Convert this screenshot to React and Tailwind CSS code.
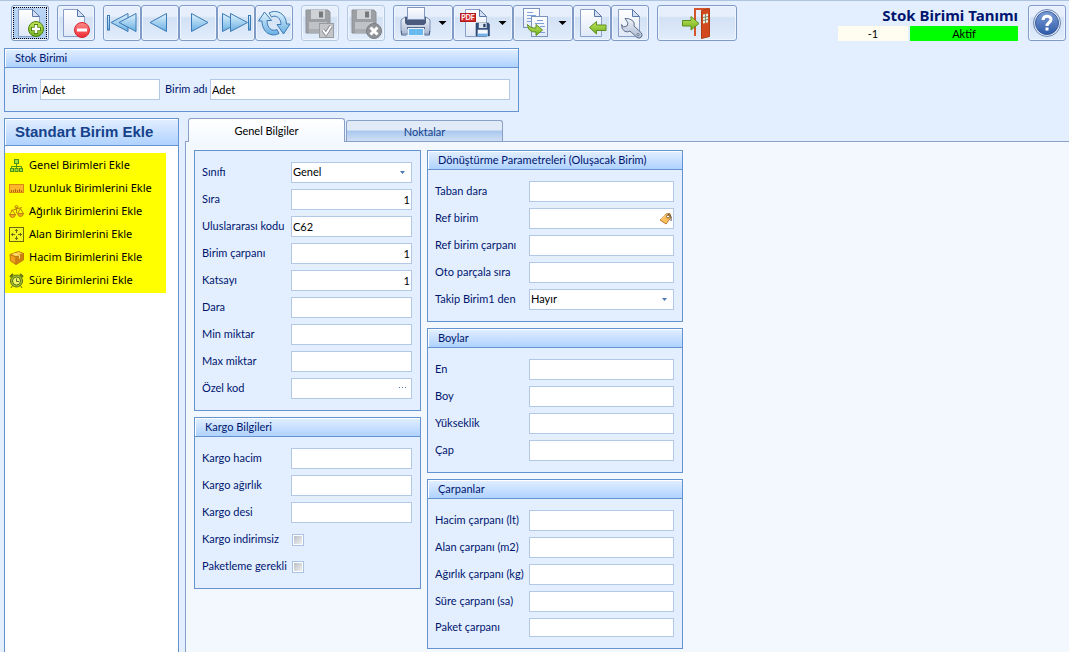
import { useState } from 'react'
import { clsx } from 'clsx'

const Page = ({ x = 7, y = 4, w = 21, h = 27 }) => (
  <g>
    <path
      d={`M${x + 0.5} ${y + 0.5}h${w - 7}l7 7v${h - 7}h${-w}z`}
      fill="url(#paper)"
      stroke="#8a9fc8"
    />
    <path d={`M${x + w - 6.5} ${y + 0.5}v7h7z`} fill="#d5e0f2" stroke="#5b78ab" />
  </g>
)

const Floppy = ({ x, y, s, gray }) => (
  <g transform={`translate(${x} ${y}) scale(${s})`}>
    <path d="M0 0H22L24 2V23H0Z" fill={gray ? '#9c9fa4' : '#33507c'} stroke={gray ? '#8e9196' : '#23395e'} />
    <rect x="5" y="0" width="14" height="9" fill={gray ? '#d0d3d6' : '#dbe6f5'} />
    <rect x="13" y="1.5" width="4" height="6" fill={gray ? '#75797e' : '#23395e'} />
    <rect x="3" y="12" width="18" height="11" fill={gray ? '#c0c2c6' : '#f4f8fd'} />
    <rect x="3" y="19" width="18" height="4" fill={gray ? '#aaadb1' : '#6bb0ea'} />
  </g>
)

const Caret = () => <path d="M45.500 16h8l-4 4z" fill="#000" />

const icons = {
  add: (
    <>
      <Page />
      <circle cx="25" cy="24" r="7.500" fill="url(#green)" stroke="#4f8212" />
      <path d="M25 19v10M20 24h10" stroke="#4f8212" strokeWidth="4" />
      <path d="M25 20v8M21 24h8" stroke="#fff" strokeWidth="2.500" />
    </>
  ),
  remove: (
    <>
      <Page x={6} />
      <circle cx="25" cy="25" r="7.500" fill="url(#red)" stroke="#d5222c" />
      <rect x="20" y="23.500" width="10" height="3" fill="#fff" />
    </>
  ),
  first: (
    <g fill="url(#sky)" stroke="#3b7ab5">
      <rect x="4.500" y="10.500" width="2" height="14.500" />
      <path d="M8 17.500 25 8.500v18z" />
      <path d="M16 17.500 33 8.500v18z" />
    </g>
  ),
  prev: <path d="M9 17.500 25.500 8.500v18z" fill="url(#sky)" stroke="#3b7ab5" />,
  next: <path d="M29 17.500 12.500 8.500v18z" fill="url(#sky)" stroke="#3b7ab5" />,
  last: (
    <g fill="url(#sky)" stroke="#3b7ab5">
      <path d="M22.500 17.500 5.500 8.500v18z" />
      <path d="M30.500 17.500 13.500 8.500v18z" />
      <rect x="31.500" y="10.500" width="2" height="14.500" />
    </g>
  ),
  refresh: (
    <g fill="url(#sky)" stroke="#3b7ab5" strokeLinejoin="round">
      <path d="M14 8C21 4 31 8 31.500 19H35L28.500 29 22 19.500h4C26 13 21 9.500 16.500 12z" />
      <path d="M24 28.500C17 32.500 7 28 7 16H3.500L9.500 7 16.500 15.500H12C12 23 17 27 22 24.500z" />
    </g>
  ),
  save: (
    <>
      <Floppy x={5} y={5} s={1} gray />
      <rect x="18.500" y="18.500" width="14" height="14" fill="#c3c5c8" stroke="#999ca1" />
      <path d="M22 25l3 4 5-8" fill="none" stroke="#7b7f85" strokeWidth="3.500" />
      <path d="M22 25l3 4 5-8" fill="none" stroke="#fff" strokeWidth="2" />
    </>
  ),
  cancel: (
    <>
      <Floppy x={5} y={5} s={1} gray />
      <circle cx="27" cy="26" r="7.500" fill="#909397" stroke="#7b7e83" />
      <path d="M23.500 22.500l7 7M30.500 22.500l-7 7" stroke="#fff" strokeWidth="3" />
    </>
  ),
  print: (
    <>
      <path d="M12 12h21l4 3v12q0 2-2 2H10q-2 0-2-2V15z" fill="url(#steel)" stroke="#7d90b6" />
      <path d="M12 12h21v6l-2 2H14l-2-2z" fill="#4a5a7c" />
      <rect x="14.500" y="2.500" width="17" height="12" fill="url(#paper)" stroke="#8296bd" />
      <rect x="14" y="22" width="18" height="2" fill="#5a6a8c" />
      <rect x="15.500" y="23.500" width="15" height="7" fill="#69b8ee" stroke="#e6f1fb" />
      <path d="M8.500 26v4h5M36.500 26v4h-5" fill="none" stroke="#51648d" />
      <Caret />
    </>
  ),
  pdf: (
    <>
      <Page x={12} />
      <rect x="7.500" y="8.500" width="15" height="8" fill="#d22f2f" stroke="#b01c1c" />
      <text x="15" y="15" fontSize="7" fontWeight="700" textAnchor="middle" fill="#fff">PDF</text>
      <Floppy x={23} y={18} s={0.56} />
      <Caret />
    </>
  ),
  copy: (
    <>
      <rect x="10.500" y="3.500" width="16" height="19" fill="url(#paper)" stroke="#7c93bd" />
      <path d="M14 7.500h6M14 10.500h9M14 13.500h9M14 16.500h9" stroke="#7fa0d8" />
      <rect x="18.500" y="11.500" width="16" height="20" fill="url(#paper)" stroke="#7c93bd" />
      <path d="M24 15.500h6M22 18.500h9M27 21.500h5M27 27.500h5" stroke="#7fa0d8" />
      <path d="M14.500 19.500q3 4 8.500 3.500v-3.500l6.500 5.500-6.500 5.500V27q-8 .5-8.500-7.500z" fill="url(#green)" stroke="#5b8f1f" />
      <Caret />
    </>
  ),
  import: (
    <>
      <Page />
      <path d="M16.500 22.500l7-6v3.500h9.500v5.500h-9.500V29z" fill="url(#green)" stroke="#5b8f1f" />
    </>
  ),
  tools: (
    <>
      <Page />
      <path
        d="M14 13.500l3 4.500-1 3-3.500 1-2-2.500q0 5.500 3.500 7 3 1 5-.5l7 6.500q2.500 1.500 4.500-.5 1.500-2.500-.5-4.500l-7-6.500q1-3.500-1.500-5.500-3.500-2.500-7.500-2z"
        fill="url(#steel)"
        stroke="#5f6f8c"
      />
      <circle cx="27" cy="29.500" r="1" fill="#fff" stroke="#5f6f8c" />
    </>
  ),
  exit: (
    <>
      <path d="M38 31V4h14" fill="none" stroke="#d4552a" strokeWidth="2" />
      <path d="M44.500 5.500 52.500 3.500v28l-8 2z" fill="#d2491d" stroke="#b23c14" />
      <path d="M46 9.500l5-1v9l-5 1z" fill="#e9efe0" />
      <path d="M48.500 9v9M46 12.500l5-1M46 15.500l5-1" stroke="#7e8a6a" />
      <path d="M25.500 15.500H34v-4l8 7-8 6.500V21h-8.500z" fill="url(#green)" stroke="#5b8f1f" />
    </>
  ),
  help: (
    <>
      <circle cx="19" cy="18" r="13.500" fill="#dfe8f6" stroke="#6c86b5" />
      <circle cx="19" cy="18" r="11.500" fill="url(#blue)" stroke="#3c5c9c" />
      <path d="M15 15c0-5 8-5 8-.5 0 3-4 3-4 6.500" fill="none" stroke="#fff" strokeWidth="3" />
      <rect x="17.500" y="22.500" width="3" height="3" fill="#fff" />
    </>
  ),
}

const toolbar = [
  [{ icon: 'add', label: 'Yeni', active: true }],
  [{ icon: 'remove', label: 'Sil' }],
  [
    { icon: 'first', label: 'İlk' },
    { icon: 'prev', label: 'Önceki' },
    { icon: 'next', label: 'Sonraki' },
    { icon: 'last', label: 'Son' },
    { icon: 'refresh', label: 'Yenile' },
  ],
  [{ icon: 'save', label: 'Kaydet', disabled: true }],
  [{ icon: 'cancel', label: 'İptal', disabled: true }],
  [
    { icon: 'print', label: 'Yazdır', width: 60 },
    { icon: 'pdf', label: 'PDF', width: 60 },
    { icon: 'copy', label: 'Kopyala', width: 60 },
    { icon: 'import', label: 'Aktar' },
    { icon: 'tools', label: 'Ayarlar' },
  ],
  [{ icon: 'exit', label: 'Çıkış', width: 80 }],
]

const unitLinks = [
  {
    label: 'Genel Birimleri Ekle',
    icon: (
      <g fill="#9be23c" stroke="#4f8f1c">
        <path d="M7.500 6v5M2.500 11V8.500h10V11" fill="none" />
        <rect x="5.500" y="1.500" width="4" height="4" />
        <rect x="1.500" y="10.500" width="3" height="3" />
        <rect x="6" y="10.500" width="3" height="3" />
        <rect x="10.500" y="10.500" width="3" height="3" />
      </g>
    ),
  },
  {
    label: 'Uzunluk Birimlerini Ekle',
    icon: (
      <>
        <rect x=".5" y="3.500" width="14" height="8" fill="#fdb52c" stroke="#d98a14" />
        <path d="M2.500 11V9M4.500 11v-2M6.500 11V8M8.500 11v-2M10.500 11V8M12.500 11v-2" stroke="#b06a10" />
      </>
    ),
  },
  {
    label: 'Ağırlık Birimlerini Ekle',
    icon: (
      <g fill="none" stroke="#bd8210">
        <path d="M2 6.500l11-3M7.500 3v6" />
        <circle cx="7.500" cy="3" r="1.500" />
        <path d="M3.500 6.500.5 10.500h6zM11.500 4.500l-3 5h6z" />
        <path d="M.5 10.500h6q-.5 3-3 3t-3-3zM8.500 9.500h6q-.5 3-3 3t-3-3z" fill="#f3a81c" />
      </g>
    ),
  },
  {
    label: 'Alan Birimlerini Ekle',
    icon: (
      <g stroke="#6a6a10">
        <rect x=".5" y=".5" width="14" height="14" fill="#f4f420" />
        <path d="M7.500 2v4M7.500 9v4M2 7.500h4M9 7.500h4" />
        <path d="M6 3.500h3M6 11.500h3M3.500 6v3M11.500 6v3" />
      </g>
    ),
  },
  {
    label: 'Hacim Birimlerini Ekle',
    icon: (
      <g stroke="#c07a10" strokeLinejoin="round">
        <path d="M1 4.500l8.500-3 5 2L7 7z" fill="#ffd04a" />
        <path d="M1 4.500L7 7v7.500L1.500 11z" fill="#f0a01c" />
        <path d="M7 7l7.500-3.500V10L7 14.500z" fill="#d0800c" />
        <path d="M4.500 3.500l6 2v3" fill="none" stroke="#ffe98a" />
      </g>
    ),
  },
  {
    label: 'Süre Birimlerini Ekle',
    icon: (
      <g stroke="#5d7213">
        <path d="M3.500 12.500 2 15M11.500 12.500l1.500 2.500" />
        <path d="M1 4 4 1M14 4l-3-3" strokeWidth="2" />
        <circle cx="7.500" cy="8" r="6" fill="#a4bf2c" />
        <circle cx="7.500" cy="8" r="4" fill="#eef56a" />
        <path d="M7.500 5.500v3H10" fill="none" />
      </g>
    ),
  },
]

function GradientDefs() {
  const stops = {
    paper: ['#ffffff', '#dfe8f7'],
    sky: ['#e0f2fd', '#69afe2'],
    green: ['#c4e65a', '#6fae20'],
    red: ['#ff8a8a', '#ee2c34'],
    steel: ['#f0f4fa', '#a9b7cf'],
    blue: ['#7d9fd8', '#2f5aa8'],
  }
  return (
    <svg className="absolute size-0" aria-hidden="true">
      <defs>
        {Object.entries(stops).map(([id, [from, to]]) => (
          <linearGradient key={id} id={id} x1="0" y1="0" x2="0" y2="1">
            <stop offset="0" stopColor={from} />
            <stop offset="1" stopColor={to} />
          </linearGradient>
        ))}
      </defs>
    </svg>
  )
}

function ToolButton({ icon, label, width = 38, active, disabled }) {
  return (
    <button
      type="button"
      aria-label={label}
      disabled={disabled}
      className={clsx(
        'h-9 rounded-[3px] border shadow-[inset_0_0_0_1px_#eef5ff]',
        disabled ? 'border-[#b4c8e2]' : 'border-[#7f9bc6]',
        active
          ? 'bg-linear-to-b from-[#bdd5f3] to-[#a9cbf2]'
          : 'bg-linear-to-b from-[#e6effb] from-30% via-[#d2e1f4] via-35% to-[#e1edfc]',
      )}
    >
      <span className={clsx('block', active && 'm-0.5 outline-1 outline-dotted outline-black')}>
        <svg
          width={active ? width - 6 : width - 2}
          height={active ? 30 : 34}
          viewBox={active ? `3 3 ${width - 6} 30` : `1 1 ${width - 2} 34`}
          className="block"
          aria-hidden="true"
        >
          {icons[icon]}
        </svg>
      </span>
    </button>
  )
}

function Group({ title, children, className }) {
  return (
    <section className={clsx('border border-[#6593cf] bg-[#e3efff]', className)}>
      {title && (
        <h2 className="h-[19px] border-b border-[#6593cf] bg-linear-to-b from-[#e3efff] to-[#afd2ff] pl-2.5 leading-[18px] shadow-[inset_1px_1px_0_#fff]">
          {title}
        </h2>
      )}
      {children}
    </section>
  )
}

const inputStyle = 'w-full border border-[#b3c8e6] bg-white px-px text-black outline-none'

function Field({ id, label, value = '', kind, short, wide }) {
  return (
    <div className={clsx('flex items-center', short ? 'h-[19px]' : 'h-[21px]')}>
      <label htmlFor={id} className={clsx('shrink-0 whitespace-nowrap', wide ? 'w-[94px]' : 'w-[89px]')}>
        {label}
      </label>
      {kind === 'check' ? (
        <input
          id={id}
          type="checkbox"
          className="ml-px size-3 appearance-none border border-[#a9c1e2] bg-linear-to-br from-[#b4b9c2] to-[#f6f6f6] shadow-[inset_0_0_0_1px_#fff] checked:from-[#3b619c]"
        />
      ) : (
        <div className="relative h-full flex-1">
          {kind === 'select' ? (
            <select id={id} defaultValue={value} className={clsx(inputStyle, 'h-full appearance-none')}>
              <option>{value}</option>
            </select>
          ) : (
            <input
              id={id}
              type="text"
              defaultValue={value}
              className={clsx(inputStyle, 'h-full', kind === 'number' && 'text-right')}
            />
          )}
          {kind === 'select' && (
            <svg width="5" height="3" className="pointer-events-none absolute top-[9px] right-[7px]" aria-hidden="true">
              <path d="M0 0h5L2.500 3z" fill="#4a76b5" />
            </svg>
          )}
          {kind === 'lookup' && (
            <button type="button" aria-label={`${label} seç`} className="absolute top-1 right-px flex h-3 w-4 items-center justify-center">
              <svg width="8" height="2" aria-hidden="true">
                <path d="M0 .5h1M3 .5h1M6 .5h1" stroke="#4a76b5" />
              </svg>
            </button>
          )}
          {kind === 'tag' && (
            <button type="button" aria-label={`${label} seç`} className="absolute top-1 right-0.5">
              <svg width="13" height="13" aria-hidden="true">
                <path d="M1 8l6-6 4-.5 1 4-5 6.500z" fill="#fbc05c" stroke="#b97b38" />
                <path d="M2 7.500l5-5" stroke="#ffe3a8" />
                <circle cx="9" cy="4.500" r="1.500" fill="#fff" stroke="#8a5a24" />
                <path d="M9 2q4 1 3 7" fill="none" stroke="#555" />
              </svg>
            </button>
          )}
        </div>
      )}
    </div>
  )
}

function FieldGroup({ title, fields, wide }) {
  return (
    <Group title={title}>
      <div className="flex flex-col gap-1.5 py-[11px] pr-2 pl-[7px]">
        {fields.map(field => (
          <Field key={field.id} wide={wide} {...field} />
        ))}
      </div>
    </Group>
  )
}

const generalFields = [
  { id: 'sinifi', label: 'Sınıfı', value: 'Genel', kind: 'select' },
  { id: 'sira', label: 'Sıra', value: '1', kind: 'number' },
  { id: 'kod', label: 'Uluslararası kodu', value: 'C62' },
  { id: 'carpan', label: 'Birim çarpanı', value: '1', kind: 'number' },
  { id: 'katsayi', label: 'Katsayı', value: '1', kind: 'number' },
  { id: 'dara', label: 'Dara' },
  { id: 'min', label: 'Min miktar' },
  { id: 'max', label: 'Max miktar' },
  { id: 'ozel', label: 'Özel kod', kind: 'lookup' },
]

const cargoFields = [
  { id: 'kargo-hacim', label: 'Kargo hacim' },
  { id: 'kargo-agirlik', label: 'Kargo ağırlık' },
  { id: 'kargo-desi', label: 'Kargo desi' },
  { id: 'kargo-indirimsiz', label: 'Kargo indirimsiz', kind: 'check' },
  { id: 'paketleme', label: 'Paketleme gerekli', kind: 'check' },
]

const conversionFields = [
  { id: 'taban-dara', label: 'Taban dara' },
  { id: 'ref-birim', label: 'Ref birim', kind: 'tag' },
  { id: 'ref-carpan', label: 'Ref birim çarpanı' },
  { id: 'oto-parcala', label: 'Oto parçala sıra' },
  { id: 'takip', label: 'Takip Birim1 den', value: 'Hayır', kind: 'select' },
]

const sizeFields = [
  { id: 'en', label: 'En' },
  { id: 'boy', label: 'Boy' },
  { id: 'yukseklik', label: 'Yükseklik' },
  { id: 'cap', label: 'Çap' },
]

const factorFields = [
  { id: 'hacim-carpan', label: 'Hacim çarpanı (lt)' },
  { id: 'alan-carpan', label: 'Alan çarpanı (m2)' },
  { id: 'agirlik-carpan', label: 'Ağırlık çarpanı (kg)' },
  { id: 'sure-carpan', label: 'Süre çarpanı (sa)' },
  { id: 'paket-carpan', label: 'Paket çarpanı', short: true },
]

function Header() {
  return (
    <header className="flex h-[48px] items-start border-t border-[#b0c4de] pt-1 pr-[3px] pl-[11px]">
      <div className="flex gap-2">
        {toolbar.map((group, i) => (
          <div key={i} className="flex">
            {group.map(item => (
              <ToolButton key={item.icon} {...item} />
            ))}
          </div>
        ))}
      </div>
      <div className="mr-2.5 ml-auto w-[180px]">
        <h1 className="h-[21px] text-right font-['Noto_Sans',sans-serif] text-[15px] leading-[21px] font-bold text-[#00156e]">
          Stok Birimi Tanımı
        </h1>
        <div className="flex gap-0.5 text-center leading-[15px] text-black">
          <span className="w-[70px] bg-[#fffcf0]">-1</span>
          <span className="flex-1 bg-[#00ff00]">Aktif</span>
        </div>
      </div>
      <ToolButton icon="help" label="Yardım" />
    </header>
  )
}

function Sidebar() {
  return (
    <aside className="w-[175px] shrink-0 border border-b-0 border-[#6593cf] bg-white">
      <h2 className="h-[27px] border-b border-[#6593cf] bg-linear-to-b from-[#e3efff] to-[#afd2ff] pl-2.5 font-['Liberation_Sans',sans-serif] text-[15px] leading-[26px] font-bold text-[#15428b] shadow-[inset_1px_1px_0_#fff]">
        Standart Birim Ekle
      </h2>
      <ul className="mt-[7px] w-[161px] bg-[#ffff00] py-px font-['Noto_Sans',sans-serif] text-[11px] text-black">
        {unitLinks.map(({ label, icon }) => (
          <li key={label}>
            <a href="#" className="flex h-[23px] items-center gap-1 pl-1 whitespace-nowrap">
              <svg width="16" height="16" className="shrink-0" aria-hidden="true">{icon}</svg>
              {label}
            </a>
          </li>
        ))}
      </ul>
    </aside>
  )
}

export default function App() {
  const [tab, setTab] = useState('genel')

  const tabStyle = name =>
    clsx(
      'w-[157px] rounded-t-[3px] border border-b-0 border-[#8ba0c9] pt-0.5',
      tab === name
        ? 'relative -mb-px h-6 bg-linear-to-b from-white to-[#f3f8ff] text-black'
        : 'h-[21px] bg-linear-to-b from-[#e1ebf8] from-45% via-[#a9c8ee] via-50% to-[#cfe0f5] text-[#15428b]',
    )

  return (
    <div
      lang="tr"
      className="flex min-h-screen flex-col bg-[#e3efff] font-['Lato','Noto_Sans',sans-serif] text-[11px] text-[#00156e]"
    >
      <GradientDefs />
      <Header />

      <Group title="Stok Birimi" className="ml-1 w-[515px]">
        <div className="flex h-[43px] items-center pr-2 pl-[7px]">
          <label htmlFor="birim" className="w-7 shrink-0">Birim</label>
          <input id="birim" defaultValue="Adet" className={clsx(inputStyle, 'h-[21px] max-w-[120px]')} />
          <label htmlFor="birim-adi" className="ml-[5px] w-[45px] shrink-0 whitespace-nowrap">Birim adı</label>
          <input id="birim-adi" defaultValue="Adet" className={clsx(inputStyle, 'h-[21px] flex-1')} />
        </div>
      </Group>

      <div className="mt-1.5 flex flex-1 gap-1.5 pl-1">
        <Sidebar />
        <main className="flex flex-1 flex-col">
          <div className="flex h-[23px] items-end gap-px pl-[3px]" role="tablist">
            <button type="button" role="tab" aria-selected={tab === 'genel'} onClick={() => setTab('genel')} className={tabStyle('genel')}>
              Genel Bilgiler
            </button>
            <button type="button" role="tab" aria-selected={tab === 'noktalar'} onClick={() => setTab('noktalar')} className={tabStyle('noktalar')}>
              Noktalar
            </button>
          </div>
          <div className="flex flex-1 items-start gap-1.5 border-t border-l border-[#8ba0c9] bg-[#f3f8ff] pt-2 pl-2">
            <div className="flex w-[227px] flex-col gap-1.5">
              <FieldGroup fields={generalFields} />
              <FieldGroup title="Kargo Bilgileri" fields={cargoFields} />
            </div>
            <div className="flex w-64 flex-col gap-1.5">
              <FieldGroup title="Dönüştürme Parametreleri (Oluşacak Birim)" fields={conversionFields} wide />
              <FieldGroup title="Boylar" fields={sizeFields} wide />
              <FieldGroup title="Çarpanlar" fields={factorFields} wide />
            </div>
          </div>
        </main>
      </div>
    </div>
  )
}
